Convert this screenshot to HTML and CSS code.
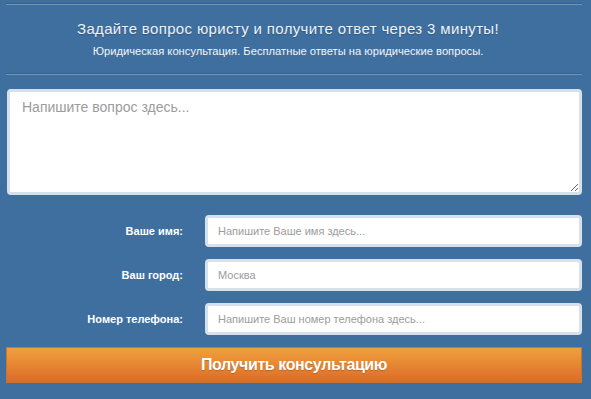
FILE: index.html
```html
<!DOCTYPE html>
<html lang="ru">
  <head>
    <meta charset="UTF-8" />
    <meta name="viewport" content="width=device-width, initial-scale=1.0" />
    <title>Вопрос юристу</title>
    <link rel="stylesheet" href="styles.css">
  </head>
  <body>
    <div class="box">
      <header class="intro">
        <h1>Задайте вопрос юристу и получите ответ через 3 минуты!</h1>
        <p>Юридическая консультация. Бесплатные ответы на юридические вопросы.</p>
      </header>
      <form class="ask">
        <textarea name="question" placeholder="Напишите вопрос здесь..."></textarea>
        <div class="field">
          <label for="name">Ваше имя:</label>
          <input id="name" name="name" type="text" placeholder="Напишите Ваше имя здесь..." />
        </div>
        <div class="field">
          <label for="city">Ваш город:</label>
          <input id="city" name="city" type="text" placeholder="Москва" />
        </div>
        <div class="field">
          <label for="phone">Номер телефона:</label>
          <input id="phone" name="phone" type="tel" placeholder="Напишите Ваш номер телефона здесь..." />
        </div>
        <button>Получить консультацию</button>
      </form>
    </div>
  </body>
</html>
```

FILE: styles.css
```css
* {
  box-sizing: border-box;
}

html,
body {
  height: 100%;
}

body {
  margin: 0;
  padding: 4px 9px 0 6px;
  background: #3f6f9f;
  font-family: "Liberation Sans", Arial, sans-serif;
  color: #fff;
}

.intro {
  border-top: 1px solid #7893b0;
  border-bottom: 1px solid #7893b0;
  box-shadow: 0 -1px 0 #35618d, inset 0 -1px 0 #35618d;
  text-align: center;
  padding: 15px 12px 17px 0;
}

.intro h1 {
  margin: 0;
  font-size: 15px;
  font-weight: normal;
  letter-spacing: 0.35px;
  color: #eef3f8;
  text-shadow: 0 1px 1px rgba(0, 0, 0, 0.25);
}

.intro p {
  margin: 8px 0 0;
  font-size: 11.2px;
  color: #f2f5f9;
}

.ask {
  margin-top: 14px;
}

textarea,
input {
  display: block;
  border: 3px solid #d6e1ec;
  border-radius: 4px;
  background: #fff;
  font-family: "Liberation Sans", Arial, sans-serif;
  color: #555;
}

textarea {
  width: 575px;
  height: 106px;
  margin-left: 1px;
  padding: 7px 12px;
  font-size: 14px;
  resize: vertical;
}

input {
  flex: 1;
  height: 32px;
  padding: 0 10px;
  font-size: 11px;
}

::placeholder {
  color: #9c9c9c;
}

.field {
  display: flex;
  align-items: center;
  gap: 22px;
  margin-top: 12px;
}

.ask textarea + .field {
  margin-top: 20px;
}

.field label {
  width: 177px;
  text-align: right;
  font-size: 11px;
  font-weight: bold;
}

button {
  display: block;
  width: 576px;
  height: 36px;
  margin-top: 12px;
  border: 1px solid #c8732e;
  background: linear-gradient(#efa13c, #dc6b29);
  color: #fff;
  font-family: "Liberation Sans", Arial, sans-serif;
  font-size: 16px;
  font-weight: bold;
  letter-spacing: -0.4px;
  text-shadow: 0 1px 1px rgba(0, 0, 0, 0.2);
}
```
